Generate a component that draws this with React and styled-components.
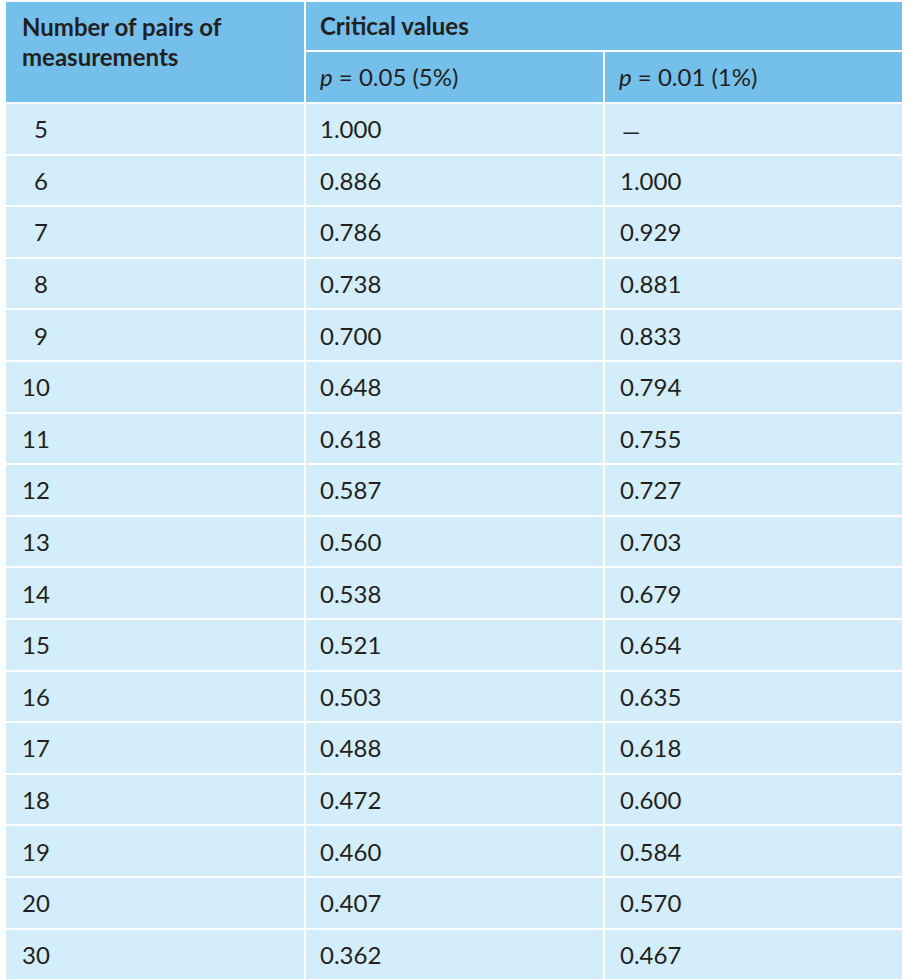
import React from 'react';
import styled, { createGlobalStyle } from 'styled-components';

const GlobalStyle = createGlobalStyle`
  html, body {
    margin: 0;
    padding: 0;
    background: #ffffff;
  }
  body {
    font-family: 'Lato', 'Open Sans', sans-serif;
    color: #231f20;
  }
`;

const Page = styled.div`
  padding: 2px 15px 0 6px;
  height: 980px;
  overflow: hidden;
  box-sizing: border-box;
`;

const Grid = styled.div`
  display: grid;
  grid-template-columns: 298px 297px 297px;
  grid-template-rows: 48px 50px;
  grid-auto-rows: 49.6px;
  gap: 2px;
  background: #ffffff;
`;

const HeadCell = styled.div`
  background: #74c0ea;
  font-size: 24px;
  font-weight: ${(p) => (p.$bold ? 700 : 400)};
  line-height: 30px;
  padding: ${(p) => (p.$top ? '10px 16px 0' : '0 14px')};
  display: flex;
  align-items: ${(p) => (p.$top ? 'flex-start' : 'center')};
  grid-row: ${(p) => (p.$rowSpan ? `span ${p.$rowSpan}` : 'auto')};
  grid-column: ${(p) => (p.$colSpan ? `span ${p.$colSpan}` : 'auto')};
`;

const Cell = styled.div`
  background: #d3eefa;
  font-size: 24px;
  padding: 0 ${(p) => p.$padX || 14}px;
  display: flex;
  align-items: center;
`;

const Count = styled.span`
  display: inline-block;
  width: 26px;
  text-align: right;
`;

const Dash = styled.span`
  display: inline-block;
  transform: scaleX(1.6);
  transform-origin: left center;
  margin-top: 4px;
`;

const Italic = styled.i`
  font-style: italic;
`;

const rows = [
  [5, '1.000', null],
  [6, '0.886', '1.000'],
  [7, '0.786', '0.929'],
  [8, '0.738', '0.881'],
  [9, '0.700', '0.833'],
  [10, '0.648', '0.794'],
  [11, '0.618', '0.755'],
  [12, '0.587', '0.727'],
  [13, '0.560', '0.703'],
  [14, '0.538', '0.679'],
  [15, '0.521', '0.654'],
  [16, '0.503', '0.635'],
  [17, '0.488', '0.618'],
  [18, '0.472', '0.600'],
  [19, '0.460', '0.584'],
  [20, '0.407', '0.570'],
  [30, '0.362', '0.467'],
];

const App = () => {
  return (
    <>
      <GlobalStyle />
      <Page>
        <Grid>
          <HeadCell $bold $top $rowSpan={2}>
            Number of pairs of
            <br />
            measurements
          </HeadCell>
          <HeadCell $bold $colSpan={2}>Critical values</HeadCell>
          <HeadCell>
            <Italic>p</Italic>&nbsp;= 0.05 (5%)
          </HeadCell>
          <HeadCell>
            <Italic>p</Italic>&nbsp;= 0.01 (1%)
          </HeadCell>
          {rows.map(([n, a, b]) => (
            <React.Fragment key={n}>
              <Cell $padX={16}>
                <Count>{n}</Count>
              </Cell>
              <Cell>{a}</Cell>
              <Cell $padX={15}>{b ?? <Dash>–</Dash>}</Cell>
            </React.Fragment>
          ))}
        </Grid>
      </Page>
    </>
  );
};

export default App;
